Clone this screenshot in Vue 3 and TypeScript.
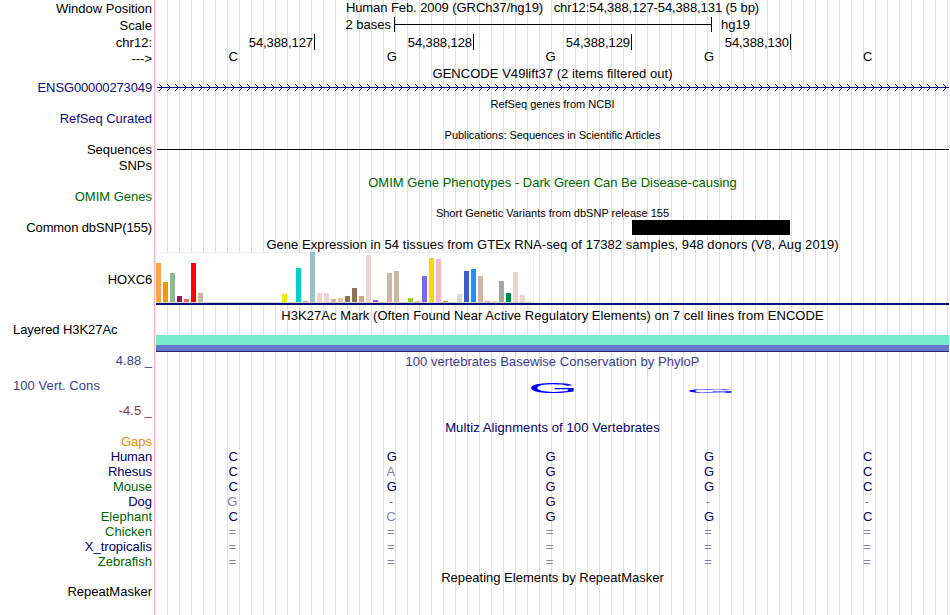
<script setup lang="ts">
interface Label {
  text: string
  gap: number
  tone?: string
}

const labels: Label[] = [
  { text: 'Window Position', gap: 1 },
  { text: 'Scale', gap: 2 },
  { text: 'chr12:', gap: 2 },
  { text: '--->', gap: 1 },
  { text: 'ENSG00000273049', gap: 14, tone: 'navy tight' },
  { text: 'RefSeq Curated', gap: 16, tone: 'navy snug' },
  { text: 'Sequences', gap: 16 },
  { text: 'SNPs', gap: 1 },
  { text: 'OMIM Genes', gap: 16, tone: 'green' },
  { text: 'Common dbSNP(155)', gap: 16, tone: 'tight' },
  { text: 'HOXC6', gap: 37, tone: 'tight' },
  { text: 'Layered H3K27Ac', gap: 35, tone: 'left snug' },
  { text: '4.88 _', gap: 16, tone: 'cons' },
  { text: '100 Vert. Cons', gap: 10, tone: 'cons left loose' },
  { text: '-4.5 _', gap: 10, tone: 'brown' },
  { text: 'Gaps', gap: 16, tone: 'orange' },
  { text: 'Human', gap: 0, tone: 'blue tight' },
  { text: 'Rhesus', gap: 0, tone: 'blue' },
  { text: 'Mouse', gap: 0, tone: 'green' },
  { text: 'Dog', gap: 0, tone: 'blue' },
  { text: 'Elephant', gap: 0, tone: 'green' },
  { text: 'Chicken', gap: 0, tone: 'green' },
  { text: 'X_tropicalis', gap: 0, tone: 'blue' },
  { text: 'Zebrafish', gap: 0, tone: 'green' },
  { text: 'RepeatMasker', gap: 15 },
]

const windowTitle = 'Human Feb. 2009 (GRCh37/hg19)   chr12:54,388,127-54,388,131 (5 bp)'
const positions = ['54,388,127', '54,388,128', '54,388,129', '54,388,130']
const bases = ['C', 'G', 'G', 'G', 'C']

// lower case marks a base that differs from human
const alignments = ['CGGGC', 'CaGGC', 'CGGGC', 'g-G--', 'CcGGC', '=====', '=====', '=====']
const isFaded = (c: string) => !/[A-Z]/.test(c)

// GTEx tissues: [height, color], in track order
const empty: [number, string] = [0, '#fff']
const tissues: [number, string][] = [
  [39, '#ffa54f'],
  [20, '#ee9a00'],
  [29, '#8fbc8f'],
  [6, '#8b1c62'],
  [3, '#ee6a50'],
  [39, '#ff0000'],
  [9, '#cdb79e'],
  ...Array.from({ length: 11 }, () => empty),
  [8, '#eeee00'],
  empty,
  [34, '#00cdcd'],
  [1, '#ee82ee'],
  [50, '#9ac0cd'],
  [9, '#eed5d2'],
  [9, '#eed5d2'],
  [3, '#cdb79e'],
  [4, '#eec591'],
  [6, '#8b7355'],
  [14, '#8b7355'],
  [6, '#cdaa7d'],
  [47, '#eed5d2'],
  [2, '#b452cd'],
  empty,
  [29, '#cdb79e'],
  [31, '#cdb79e'],
  empty,
  [4, '#9acd32'],
  [1, '#cdb79e'],
  [26, '#7a67ee'],
  [44, '#ffd700'],
  [43, '#ffb6c1'],
  [1, '#cd9b1d'],
  empty,
  [8, '#d9d9d9'],
  [31, '#3a5fcd'],
  [33, '#1e90ff'],
  [26, '#cdb79e'],
  [1, '#cdb79e'],
  [1, '#ffd39b'],
  [21, '#a6a6a6'],
  [9, '#008b45'],
  [30, '#eed5d2'],
  [7, '#eed5d2'],
  empty,
]

const chevrons = Array.from({ length: 99 }, (_, i) => `M${3 + i * 8} 0l3.5 3.5l-3.5 3.5`).join('')
</script>

<template>
  <div class="browser">
    <div class="labels">
      <div
        v-for="label in labels"
        :key="label.text"
        class="label"
        :class="label.tone"
        :style="{ marginTop: label.gap + 'px' }"
      >
        {{ label.text }}
      </div>
    </div>

    <div class="tracks">
      <div class="title window">{{ windowTitle }}</div>

      <div class="scale">
        <span class="size">2 bases</span>
        <span class="bar"></span>
        <span>hg19</span>
      </div>

      <div class="ruler">
        <span v-for="p in positions" :key="p">{{ p }}</span>
      </div>

      <div class="bases">
        <span v-for="(b, i) in bases" :key="i">{{ b }}</span>
      </div>

      <div class="title gencode">GENCODE V49lift37 (2 items filtered out)</div>
      <svg class="gene" width="793" height="7">
        <path class="intron" d="M1 3.5H793" />
        <path :d="chevrons" />
      </svg>

      <div class="title small refseq">RefSeq genes from NCBI</div>
      <div class="title small pubs">Publications: Sequences in Scientific Articles</div>
      <div class="sequence"></div>

      <div class="title omim">OMIM Gene Phenotypes - Dark Green Can Be Disease-causing</div>

      <div class="title small dbsnp">Short Genetic Variants from dbSNP release 155</div>
      <div class="variant"></div>

      <div class="title gtex">Gene Expression in 54 tissues from GTEx RNA-seq of 17382 samples, 948 donors (V8, Aug 2019)</div>
      <div class="chart">
        <i v-for="([h, color], i) in tissues" :key="i" :style="{ height: h + 'px', background: color }"></i>
      </div>
      <div class="model"></div>

      <div class="title h3k">H3K27Ac Mark (Often Found Near Active Regulatory Elements) on 7 cell lines from ENCODE</div>
      <div class="signal"></div>

      <div class="title phylop">100 vertebrates Basewise Conservation by PhyloP</div>
      <svg class="logo" width="793" height="24">
        <text transform="translate(371.7 16.8) scale(6.5 1.55)">G</text>
        <text transform="translate(529.7 16.9) scale(6.5 0.5)">G</text>
      </svg>

      <div class="title multiz">Multiz Alignments of 100 Vertebrates</div>
      <div class="alignment">
        <div v-for="(row, r) in alignments" :key="r" class="bases">
          <span v-for="(c, i) in row" :key="i" :class="{ faded: isFaded(c) }">{{ c.toUpperCase() }}</span>
        </div>
      </div>

      <div class="title repeats">Repeating Elements by RepeatMasker</div>
    </div>
  </div>
</template>

<style>
body {
  margin: 0;
  background: #fff;
}
</style>

<style scoped>
.browser {
  display: flex;
  width: 950px;
  height: 615px;
  overflow: hidden;
  font: 13px/15px 'Liberation Sans', Arial, sans-serif;
  color: #000;
}

.labels {
  box-sizing: border-box;
  width: 155px;
  padding: 0 2px 0 13px;
  border-right: 1px solid #ffb4b4;
  text-align: right;
}
.label {
  height: 15px;
  white-space: nowrap;
}
.left {
  text-align: left;
}
.tight {
  letter-spacing: -0.13px;
}
.snug {
  letter-spacing: -0.07px;
}
.loose {
  letter-spacing: 0.07px;
}
.navy {
  color: #0c0c78;
}
.blue {
  color: #000064;
}
.green {
  color: #006400;
}
.cons {
  color: #3c3c8c;
}
.brown {
  color: #8c3c3c;
}
.orange {
  color: #e68c0a;
}

.tracks {
  display: flex;
  flex-direction: column;
  width: 793px;
  padding-left: 1px;
  background: repeating-linear-gradient(to right, #dcdcf8 0 1px, transparent 1px 12px) 12px 0 no-repeat;
}
.title {
  height: 15px;
  text-align: center;
  white-space: pre;
}
.small {
  font-size: 11px;
}
.window {
  letter-spacing: -0.08px;
}

.scale {
  display: flex;
  height: 15px;
  margin-top: 2px;
}
.size {
  width: 238px;
  padding-right: 3px;
  box-sizing: border-box;
  text-align: right;
}
.bar {
  box-sizing: border-box;
  width: 318px;
  margin-right: 9px;
  border: solid #000;
  border-width: 0 1px;
  background: linear-gradient(#000, #000) 0 7px / 100% 1px no-repeat;
}

.ruler {
  display: grid;
  grid-template-columns: 159px 159px 158px 159px;
  height: 15px;
  margin-top: 2px;
  letter-spacing: -0.08px;
  text-align: right;
}
.ruler span {
  padding: 1px 1px 0 0;
  border-right: 1px solid #000;
}

.bases {
  display: grid;
  grid-template-columns: repeat(5, 1fr);
  height: 15px;
  margin-right: 3px;
  margin-left: -3px;
  text-align: center;
}
.bases span {
  padding-left: 2px;
}
.bases .faded {
  padding-left: 0;
  color: #8080b4;
}
.alignment {
  margin-top: 14px;
  color: #000064;
}

.gencode {
  margin-top: 2px;
  letter-spacing: 0.04px;
}
.gene {
  display: block;
  margin-top: 3px;
  fill: none;
  stroke: #0c0c78;
}
.intron {
  shape-rendering: crispEdges;
}
.refseq {
  margin-top: 6px;
}
.pubs {
  margin-top: 16px;
  letter-spacing: -0.04px;
}
.sequence {
  height: 1px;
  margin: 6px 0 0 1px;
  background: #000;
}
.omim {
  margin-top: 25px;
  color: #006400;
}
.dbsnp {
  height: 14px;
  margin-top: 16px;
}
.variant {
  width: 158px;
  height: 15px;
  margin-left: 476px;
  background: #000;
}
.gtex {
  margin-top: 2px;
  letter-spacing: 0.055px;
}
.chart {
  box-sizing: border-box;
  display: flex;
  align-items: flex-end;
  gap: 2px;
  width: 378px;
  height: 51px;
  border-right: 1px solid #eee;
  border-bottom: 1px solid #d3d3d3;
  background: linear-gradient(#eee 0 1px, #fff 1px);
}
.chart i {
  flex: none;
  width: 5px;
}
.model {
  height: 2px;
  background: #0c0c78;
}
.h3k {
  margin-top: 3px;
  letter-spacing: 0.057px;
}
.signal {
  height: 17px;
  margin-top: 12px;
  background: linear-gradient(#78ebcd 0 10px, #6478cd 10px 16px, #282864 16px);
}
.phylop {
  margin-top: 2px;
  letter-spacing: 0.04px;
  color: #3c3c8c;
}
.logo {
  display: block;
  margin-top: 7px;
  fill: #00f;
  font-size: 10px;
}
.multiz {
  margin-top: 20px;
  letter-spacing: 0.1px;
  color: #000064;
}
.repeats {
  margin-top: 1px;
}
</style>
